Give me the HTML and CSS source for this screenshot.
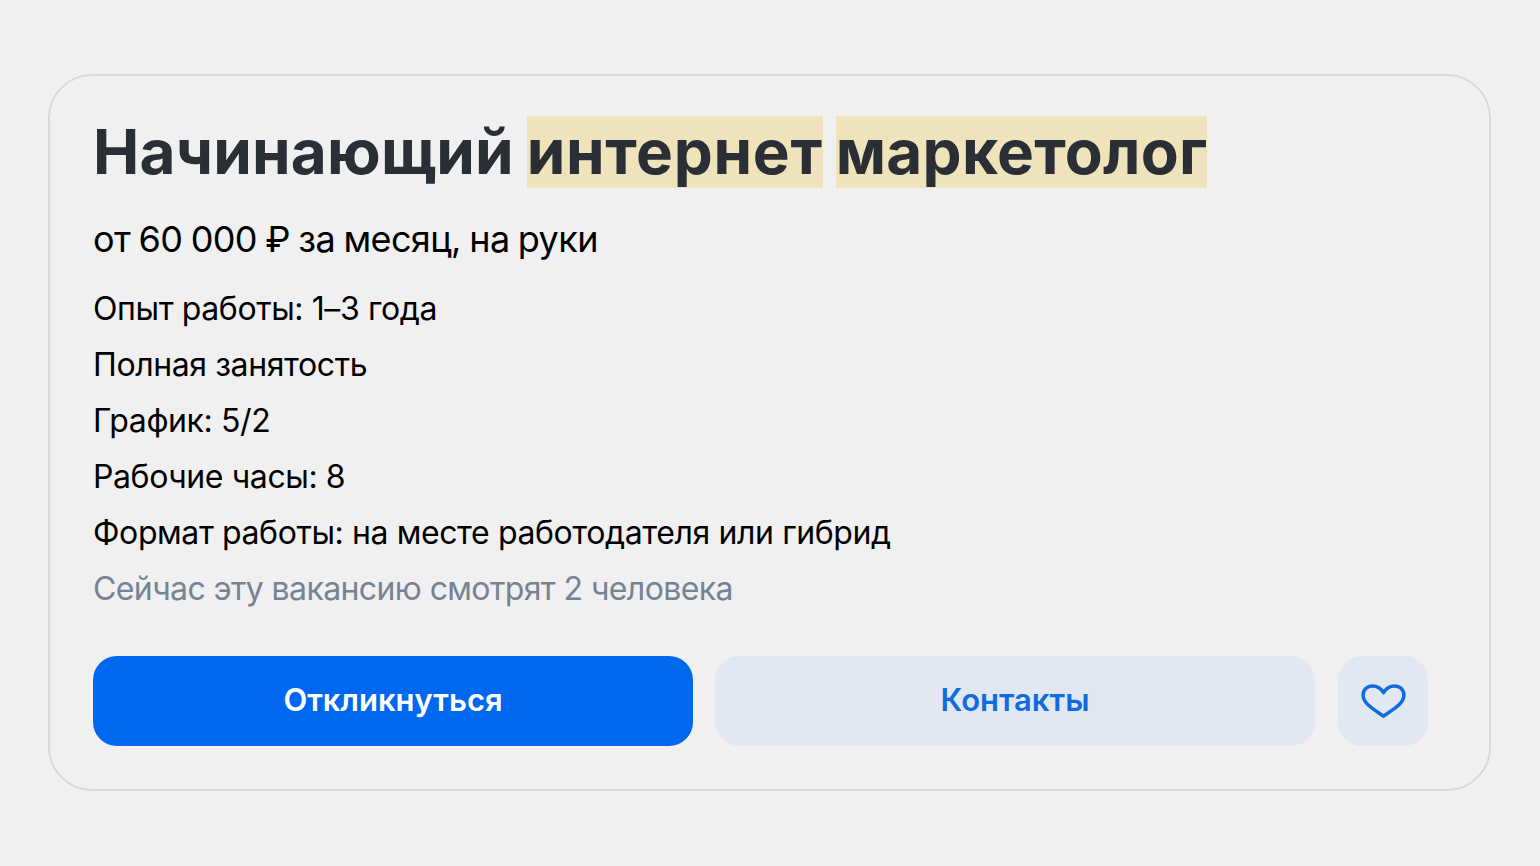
FILE: index.html
```html
<!DOCTYPE html>
<html lang="ru">
<head>
  <meta charset="UTF-8" />
  <title>Начинающий интернет маркетолог</title>
  <link rel="stylesheet" href="styles.css">
</head>
<body>
<div class="card">
  <h1 class="title">Начинающий <span class="hl">интернет</span> <span class="hl hl-long">маркетолог</span></h1>
  <div class="salary">от 60 000 ₽ за месяц, на руки</div>
  <ul class="info">
    <li>Опыт работы: 1–3 года</li>
    <li>Полная занятость</li>
    <li>График: 5/2</li>
    <li>Рабочие часы: 8</li>
    <li>Формат работы: на месте работодателя или гибрид</li>
    <li class="muted">Сейчас эту вакансию смотрят 2 человека</li>
  </ul>
  <div class="actions">
    <button class="btn btn-primary">Откликнуться</button>
    <button class="btn btn-light">Контакты</button>
    <button class="btn-fav" aria-label="В избранное">
      <svg width="45" height="35" viewBox="0 0 46 36" fill="none">
        <path d="M23 33C17 28.5 2 21 2 11.5C2 6 6.2 2 11.6 2C16.3 2 20.5 4.5 23 9C25.5 4.5 29.7 2 34.4 2C39.8 2 44 6 44 11.5C44 21 29 28.5 23 33Z" stroke="#0f6cde" stroke-width="3.6" stroke-linejoin="round"/>
      </svg>
    </button>
  </div>
</div>
</body>
</html>
```

FILE: styles.css
```css
html, body {
  margin: 0;
  padding: 0;
  height: 866px;
  overflow: hidden;
  background: #f0f0f0;
  font-family: Inter, "Liberation Sans", Arial, sans-serif;
  color: #000;
}
.card {
  box-sizing: border-box;
  width: 1443px;
  height: 717px;
  margin: 74px 0 0 48px;
  padding: 40px 61px 44px 43px;
  border: 2px solid #d8d8d8;
  border-radius: 44px;
}
.title {
  margin: 0;
  font-size: 62px;
  line-height: 72px;
  font-weight: 700;
  color: #2a2f36;
  letter-spacing: 0.2px;
  word-spacing: -2px;
}
.hl {
  display: inline-block;
  letter-spacing: 0.7px;
  background: #eee3bb;
}
.hl-long {
  letter-spacing: 0.3px;
}
.salary {
  margin-top: 27px;
  font-size: 36px;
  line-height: 48px;
  letter-spacing: -0.6px;
  word-spacing: -1.2px;
}
.info {
  list-style: none;
  margin: 18px 0 0;
  padding: 0;
  font-size: 32px;
  line-height: 56px;
  letter-spacing: -0.4px;
}
.muted {
  color: #768393;
  letter-spacing: -0.6px;
}
.actions {
  display: flex;
  gap: 22px;
  margin-top: 39px;
}
.btn {
  width: 600px;
  height: 90px;
  padding: 0 0 4px;
  border: 0;
  border-radius: 24px;
  font-family: inherit;
  font-size: 31px;
  font-weight: 600;
}
.btn-primary {
  background: #0068f0;
  color: #fff;
}
.btn-light {
  background: #e2e8f2;
  color: #0f6cde;
}
.btn-fav {
  display: flex;
  align-items: center;
  justify-content: center;
  width: 90px;
  height: 90px;
  margin-left: 1px;
  padding: 0;
  border: 0;
  border-radius: 24px;
  background: #e2e8f2;
}
```
